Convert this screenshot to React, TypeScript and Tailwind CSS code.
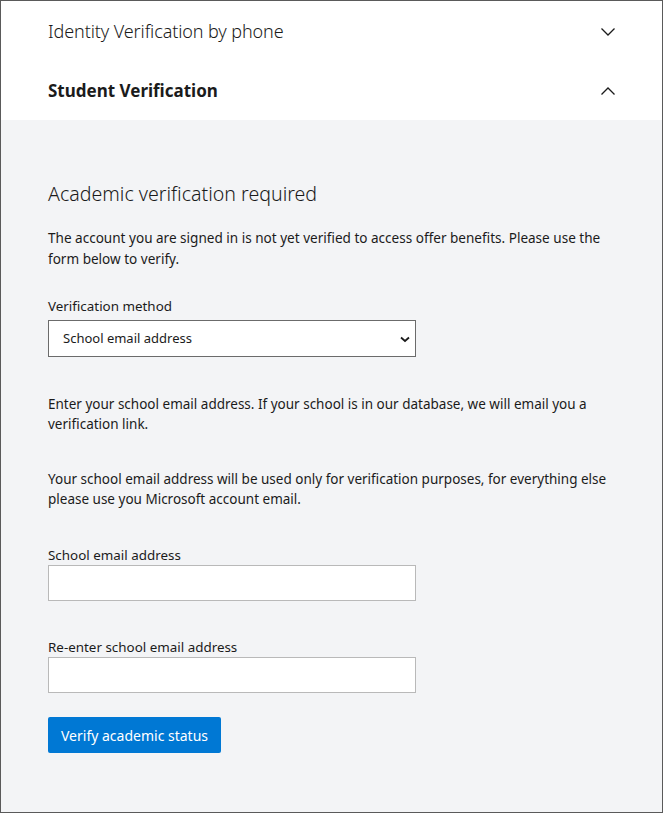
import React from "react";

const font = { fontFamily: '"Noto Sans", "Open Sans", sans-serif' };

const Chevron = ({ up }: { up?: boolean }) => (
  <svg width="16" height="10" viewBox="0 0 16 10" fill="none" className="block">
    <path
      d={up ? "M1.5 8.5 L8 2 L14.5 8.5" : "M1.5 1.5 L8 8 L14.5 1.5"}
      stroke="#1b1b1b"
      strokeWidth="1.3"
    />
  </svg>
);

const Field = ({ label }: { label: string }) => (
  <div className="flex flex-col">
    <label className="text-[13.4px] leading-[20px] text-[#1b1b1b]">{label}</label>
    <input
      type="email"
      className="w-[368px] h-[36px] bg-white border border-[#b9b9b9] px-3 text-[13px] outline-none"
    />
  </div>
);

export default function App() {
  return (
    <div
      className="w-[663px] h-[813px] border border-[#5a5a5a] bg-[#f3f4f6] flex flex-col text-[#1b1b1b]"
      style={font}
    >
      <div className="bg-white">
        <div className="h-[59px] pt-[2px] flex items-center justify-between pl-[47px] pr-[46px]">
          <span className="text-[18px] font-light tracking-[-0.1px]">Identity Verification by phone</span>
          <Chevron />
        </div>
        <div className="h-[60px] pt-[2px] flex items-center justify-between pl-[47px] pr-[46px]">
          <span className="text-[17px] font-bold">Student Verification</span>
          <Chevron up />
        </div>
      </div>

      <div className="pl-[47px] pr-[20px] pt-[60px]">
        <h2 className="text-[19.6px] font-light leading-[28px]">Academic verification required</h2>
        <p className="mt-[20px] text-[13.55px] leading-[21px]">
          The account you are signed in is not yet verified to access offer benefits. Please use the
          <br />
          form below to verify.
        </p>

        <div className="mt-[26px] flex flex-col">
          <label className="text-[13.4px] leading-[20px]">Verification method</label>
          <div className="relative w-[368px] h-[37px] mt-[4px]">
            <select className="appearance-none w-full h-full bg-white border border-[#6b6b6b] pl-[14px] pr-8 text-[13px] outline-none">
              <option>School email address</option>
            </select>
            <svg
              width="10"
              height="7"
              viewBox="0 0 10 7"
              className="absolute right-[6px] top-[16px] pointer-events-none"
            >
              <path d="M1 1.5 L5 5 L9 1.5" stroke="#1b1b1b" strokeWidth="1.8" fill="none" />
            </svg>
          </div>
        </div>

        <p className="mt-[37px] text-[13.5px] leading-[20px]">
          Enter your school email address. If your school is in our database, we will email you a
          <br />
          verification link.
        </p>
        <p className="mt-[35px] text-[13.5px] leading-[20px]">
          Your school email address will be used only for verification purposes, for everything else
          <br />
          please use you Microsoft account email.
        </p>

        <div className="mt-[36px] flex flex-col gap-[36px]">
          <Field label="School email address" />
          <Field label="Re-enter school email address" />
        </div>

        <button className="mt-[24px] h-[36px] px-[13px] rounded-[2px] bg-[#0078d4] text-white text-[14px]">
          Verify academic status
        </button>
      </div>
    </div>
  );
}
